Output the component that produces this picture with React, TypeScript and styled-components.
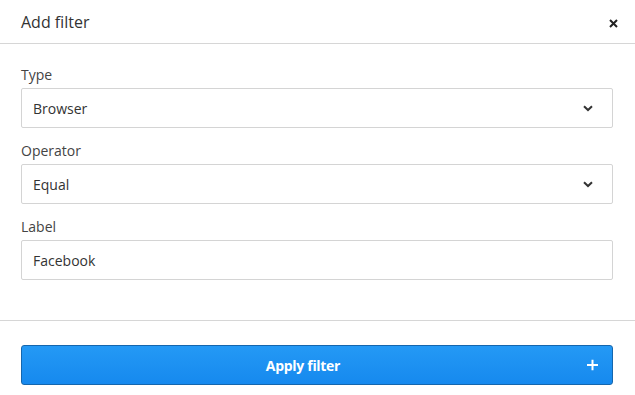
import React from 'react'
import styled, { createGlobalStyle } from 'styled-components'

const GlobalStyle = createGlobalStyle`
  html, body {
    margin: 0;
    padding: 0;
    background: #fff;
  }
  body {
    font-family: "Open Sans", "Noto Sans", Arial, sans-serif;
    color: #333;
  }
`

const Modal = styled.div`
  width: 635px;
  height: 395px;
  background: #fff;
  display: flex;
  flex-direction: column;
`

const Header = styled.div`
  height: 44px;
  box-sizing: border-box;
  border-bottom: 1px solid #d6d6d6;
  display: flex;
  align-items: center;
  justify-content: space-between;
  padding: 0 16px 0 21px;
  flex-shrink: 0;
`

const Title = styled.h2`
  margin: 0;
  font-size: 16px;
  font-weight: 400;
  color: #333;
  line-height: 22px;
  padding-top: 1px;
`

const CloseButton = styled.button`
  border: none;
  background: none;
  padding: 0;
  width: 12px;
  height: 12px;
  display: flex;
  align-items: center;
  justify-content: center;
  cursor: pointer;
  color: #222;
  margin-top: 3px;
`

const Body = styled.div`
  padding: 21px 22px 40px 21px;
  display: flex;
  flex-direction: column;
  gap: 13px;
  border-bottom: 1px solid #d6d6d6;
`

const Field = styled.div`
  display: flex;
  flex-direction: column;
  gap: 3px;
`

const Label = styled.label`
  font-size: 14px;
  line-height: 20px;
  color: #444;
`

const Control = styled.div`
  height: 40px;
  box-sizing: border-box;
  border: 1px solid #d4d4d4;
  border-radius: 2px;
  display: flex;
  align-items: center;
  justify-content: space-between;
  padding: 0 19px 0 11px;
  font-size: 14px;
  color: #333;
  background: #fff;
`

const Footer = styled.div`
  padding: 24px 22px 0 21px;
`

const ApplyButton = styled.button`
  width: 100%;
  height: 40px;
  box-sizing: border-box;
  border: 1px solid #1566ad;
  border-radius: 3px;
  background: linear-gradient(#2499f5, #1689ee);
  color: #fff;
  font-family: "Open Sans", Arial, sans-serif;
  font-size: 14px;
  font-weight: 700;
  letter-spacing: -0.3px;
  position: relative;
  display: flex;
  align-items: center;
  justify-content: center;
  padding: 0 28px 0 0;
  cursor: pointer;
`

const PlusIcon = styled.span`
  position: absolute;
  right: 14px;
  top: 50%;
  transform: translateY(-50%);
  display: flex;
`

const Chevron = () => (
  <svg width="10" height="7" viewBox="0 0 10 7">
    <path d="M1 1.2 L5 5 L9 1.2" fill="none" stroke="#333" strokeWidth="2" />
  </svg>
)

const Cross = () => (
  <svg width="9" height="9" viewBox="0 0 9 9">
    <path d="M1 1 L8 8 M8 1 L1 8" stroke="#222" strokeWidth="2" />
  </svg>
)

const Plus = () => (
  <svg width="11" height="11" viewBox="0 0 11 11">
    <path d="M5.5 0 V11 M0 5.5 H11" stroke="#fff" strokeWidth="2" />
  </svg>
)

export default function App() {
  return (
    <>
      <GlobalStyle />
      <Modal>
        <Header>
          <Title>Add filter</Title>
          <CloseButton aria-label="Close">
            <Cross />
          </CloseButton>
        </Header>
        <Body>
          <Field>
            <Label>Type</Label>
            <Control>
              <span>Browser</span>
              <Chevron />
            </Control>
          </Field>
          <Field>
            <Label>Operator</Label>
            <Control>
              <span>Equal</span>
              <Chevron />
            </Control>
          </Field>
          <Field>
            <Label>Label</Label>
            <Control>
              <span>Facebook</span>
            </Control>
          </Field>
        </Body>
        <Footer>
          <ApplyButton>
            Apply filter
            <PlusIcon>
              <Plus />
            </PlusIcon>
          </ApplyButton>
        </Footer>
      </Modal>
    </>
  )
}
